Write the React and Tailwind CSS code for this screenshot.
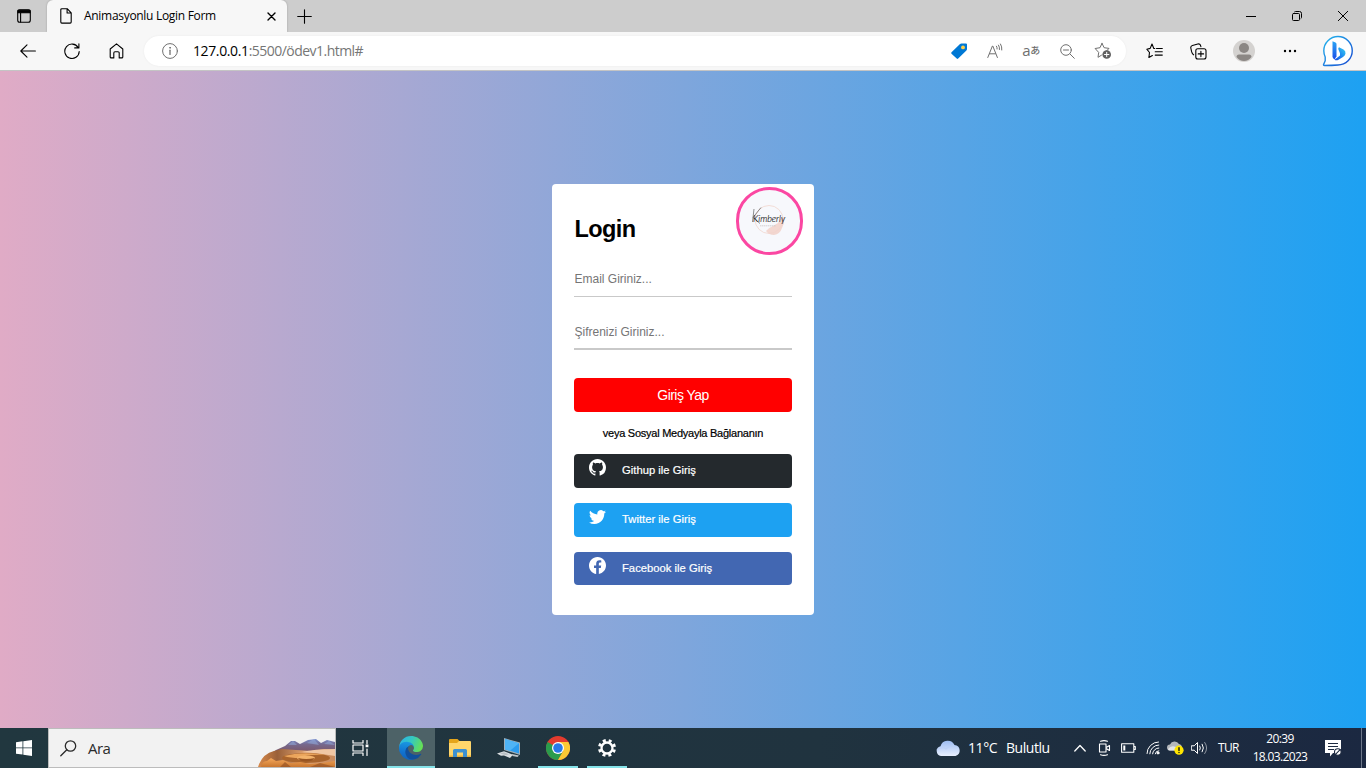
import React from "react";
import { BsGithub, BsTwitter, BsFacebook } from "react-icons/bs";

function Svg({ w, h, children, className = "", sw = 1.1, box }) {
  return (
    <svg width={w} height={h} viewBox={box || `0 0 ${w} ${h}`} fill="none" stroke="currentColor" strokeWidth={sw} strokeLinecap="round" strokeLinejoin="round" className={"block shrink-0 " + className}>
      {children}
    </svg>
  );
}

function Cell({ className, children }) {
  return <div className={"flex h-full shrink-0 items-center justify-center " + className}>{children}</div>;
}

function TabStrip() {
  return (
    <div className="flex h-8 w-full bg-[#cdcdcd]">
      <Cell className="w-12">
        <Svg w={14} h={14}>
          <rect x="0.7" y="0.7" width="12.6" height="12.6" rx="2" />
          <path d="M1 1.2h12v2.6H1z" fill="currentColor" />
          <path d="M3.6 4v9" />
        </Svg>
      </Cell>
      <div className="-ml-px flex w-[240px] items-center rounded-t-md bg-[#f7f7f7] pl-[13px] pr-[11px] shadow-[0_0_2px_#999]">
        <Svg w={12} h={16}>
          <path d="M1.8.7h5.4l4 4.2v9.2a1 1 0 0 1-1 1H1.8a1 1 0 0 1-1-1V1.7a1 1 0 0 1 1-1zM7.1.8V5h4" />
        </Svg>
        <span className="ml-3 w-[140px] whitespace-nowrap text-[12px] leading-4 tracking-[-0.3px]">Animasyonlu Login Form</span>
        <Svg w={9} h={9} className="ml-auto" sw={1.4}>
          <path d="M1 1l7 7M8 1L1 8" />
        </Svg>
      </div>
      <Cell className="ml-[9px] w-4">
        <Svg w={15} h={15}>
          <path d="M7.5.7v13.6M.7 7.5h13.6" />
        </Svg>
      </Cell>
      <div className="ml-auto flex h-8">
        <Cell className="w-[46px]">
          <Svg w={10} h={10} sw={1}><path d="M0 5.5h10" /></Svg>
        </Cell>
        <Cell className="w-[46px]">
          <Svg w={10} h={10} sw={1}>
            <rect x=".5" y="2.5" width="7" height="7" rx="1" />
            <path d="M2.5.9Q2.8.5 3.5.5H7.5a2 2 0 0 1 2 2V6.5q0 .7-.5 1" />
          </Svg>
        </Cell>
        <Cell className="w-[46px]">
          <Svg w={10} h={10} sw={1}><path d="M.3.3l9.4 9.4M9.7.3L.3 9.7" /></Svg>
        </Cell>
      </div>
    </div>
  );
}

function Toolbar() {
  return (
    <div className="flex h-[39px] w-full items-center border-b border-[#c4c4c4] bg-[#f7f7f7] pl-1.5">
      <Cell className="w-11">
        <Svg w={16} h={14}><path d="M15.4 7H.8M7 .8L.8 7 7 13.2" /></Svg>
      </Cell>
      <Cell className="w-11">
        <Svg w={16} h={17}>
          <path d="M14.2 4.6A7.2 7.2 0 1 0 15.2 8.5M14.9.9v4h-4.2" />
        </Svg>
      </Cell>
      <Cell className="w-11">
        <Svg w={15} h={16}>
          <path d="M7.5.9L1.2 6v7.9a1 1 0 0 0 1 1h2.6V10a1.2 1.2 0 0 1 1.2-1.2h3A1.2 1.2 0 0 1 10.2 10v4.9h2.6a1 1 0 0 0 1-1V6z" />
        </Svg>
      </Cell>
      <div className="ml-1.5 flex h-[30px] w-[982px] items-center rounded-full bg-white pl-[18px] pr-[5px] text-[#707070] shadow-[0_0_2px_#e8e8e8]">
        <Svg w={16} h={16} sw={1}>
          <circle cx="8" cy="8" r="7.4" />
          <path d="M8 7.2v4.2" strokeWidth="1.3" />
          <circle cx="8" cy="4.8" r=".4" fill="currentColor" />
        </Svg>
        <span className="ml-[15px] whitespace-nowrap text-[14px] leading-5 tracking-[-0.53px] text-[#767676]">
          <span className="tracking-[-0.38px] text-black">127.0.0.1</span>:5500/ödev1.html#
        </span>
        <div className="ml-auto flex h-full">
          <Cell className="w-9">
            <Svg w={18} h={18}>
              <path d="M1.5 10.3L10 2q.6-.6 1.4-.6H16q1 0 1 1V7q0 .8-.6 1.4L8.200 16.6q-.8.7-1.5 0L1.5 11.7q-.7-.7 0-1.4z" fill="#0078d4" stroke="none" />
              <circle cx="13" cy="5.4" r="1.9" fill="#ffd04a" stroke="none" />
            </Svg>
          </Cell>
          <Cell className="w-9">
            <Svg w={16} h={16} sw={1}>
              <path d="M.8 14.500L5.400 3h.4l4.600 11.500M2.400 10.800h6M9.500 3.200q.8 1.300.6 2.800M11.500 2.100q1.300 2 1 4.400M13.500 1q1.700 2.700 1.300 6" />
            </Svg>
          </Cell>
          <Cell className="w-9">
            <span className="flex items-center pb-0.5 text-[15px] leading-4 tracking-[-0.5px]">
              a<span className="text-[10px] font-medium">あ</span>
            </span>
          </Cell>
          <Cell className="w-9">
            <Svg w={15} h={15} sw={1}>
              <circle cx="6" cy="6" r="5.3" /><path d="M3.500 6h5M10 10l4.300 4.300" />
            </Svg>
          </Cell>
          <Cell className="w-9">
            <Svg w={18} h={18} sw={1}>
              <path d="M8 1.300l2.100 4.400 4.900.7-2.600 2.700M7.500 13.200L4 15.300l.7-4.900L1.100 6.500 6 5.700 8 1.300" />
              <circle cx="12.700" cy="12.500" r="4.300" fill="#606060" stroke="none" />
              <path d="M12.700 10.300v4.400M10.500 12.500h4.400" stroke="white" />
            </Svg>
          </Cell>
        </div>
      </div>
      <Cell className="ml-1.5 w-11">
        <Svg w={17} h={16}>
          <path d="M8.800 5.500H7.800L6 1 4.200 5.400.8 6.200l2.700 3.300-.6 5L6.400 12.500M10.500 5.500h5.800M9.200 8.800h7.100M9.200 12.100h7.100" />
        </Svg>
      </Cell>
      <Cell className="w-11">
        <Svg w={17} h={17}>
          <rect x="5.800" y="5.800" width="10.200" height="10.200" rx="2" />
          <path d="M10.900 8.200v5.400M8.200 10.900h5.400M3.600 11.800C2.200 11 1.900 9.900 1.600 8.700L.8 5Q.5 3 2.400 2.500L7.800 1q2-.4 2.700 1.300l.4 1.300" />
        </Svg>
      </Cell>
      <Cell className="w-[47px]">
        <Svg w={22} h={22}>
          <circle cx="11" cy="11" r="11" fill="#d4d2d0" stroke="none" />
          <circle cx="11" cy="8" r="5" fill="#8b8784" stroke="none" />
          <path d="M3.500 17q0-2.500 2.500-2.500h10q2.500 0 2.500 2.500Q15.500 21 11 21T3.500 17z" fill="#8b8784" stroke="none" />
        </Svg>
      </Cell>
      <Cell className="w-[46px]">
        <Svg w={14} h={4}>
          <g fill="currentColor" stroke="none"><circle cx="2" cy="2" r="1.200" /><circle cx="7" cy="2" r="1.200" /><circle cx="12" cy="2" r="1.200" /></g>
        </Svg>
      </Cell>
      <Cell className="w-[50px]">
        <Svg w={32} h={32}>
          <defs>
            <linearGradient id="bingRing" x1="0" y1="0" x2="1" y2="1"><stop stopColor="#24b9ee" /><stop offset="1" stopColor="#1747d0" /></linearGradient>
            <linearGradient id="bingB" x1="0" y1="1" x2="1" y2="0"><stop stopColor="#1b4ce0" /><stop offset=".5" stopColor="#1f8df0" /><stop offset="1" stopColor="#38d0f0" /></linearGradient>
            <linearGradient id="bingStem" x1="0" y1="0" x2="0" y2="1"><stop stopColor="#2aa5f4" /><stop offset="1" stopColor="#1b4ce8" /></linearGradient>
          </defs>
          <path d="M16 1.500A14.200 14.200 0 1 1 16 30q-6 .5-13.500.5c-1 0-1.200-.6-.8-1.300l1.500-3.500V22Q1.800 19 1.800 15.700A14.200 14.200 0 0 1 16 1.500z" fill="white" stroke="url(#bingRing)" strokeWidth="1.400" />
          <path d="M10.500 6.300l3 1.200q1 .5 1 1.500v12.300l-1.800 3.200q-2.200-.8-2.200-3z" fill="url(#bingStem)" stroke="none" />
          <path d="M17 12.300l4.500 2.200q2.400 1.500 2 4.200-.4 2-2.500 3.300l-4.500 2.700q-2.200 1-4 0L18 20.500v-2.300l-1.500-3.500q-.7-1.600.5-2.400z" fill="url(#bingB)" stroke="none" />
        </Svg>
      </Cell>
    </div>
  );
}

function SocialButton({ color, icon, label, height = "h-[34px]" }) {
  return (
    <button className={`flex w-full items-start rounded-[4px] pl-[15px] text-left text-white ${height} ${color}`}>
      <span className="mt-[5px] w-[33px]">{icon}</span>
      <span className="mt-[9px] whitespace-nowrap text-[11.25px] leading-[14px] [-webkit-text-stroke:0.2px_white]">{label}</span>
    </button>
  );
}

function LoginCard() {
  return (
    <form className="relative mt-[113px] h-[431px] w-[262px] rounded-[4px] bg-white px-[22px] pt-[32px] font-['Liberation_Sans',Arial,sans-serif] text-black">
      <div className="absolute left-[184px] top-[3px] h-[68px] w-[67px] rounded-full border-[3px] border-[#fb47a2] bg-[#f7f8fc]">
        <svg width="61" height="62" viewBox="0 0 61 62" className="block">
          <circle cx="30" cy="29.500" r="14" fill="none" stroke="#f3ddd7" strokeWidth="1" />
          <path d="M27 41q2-3 7-5l5-3 3-5 3-1q-1 4 0 6l-2 5q-2 6-8 7-5 0-8-4z" fill="#f2d3cb" opacity=".9" />
          <path d="M15 19l-1.500 13M22 17.500l-8 10 7 6" fill="none" stroke="#222" strokeWidth=".5" />
          <text x="14" y="32" fontFamily="Lato, sans-serif" fontStyle="italic" fontWeight="300" fontSize="9" fill="#222" stroke="#222" strokeWidth=".15">Kimberly</text>
          <path d="M21 35.800h16" stroke="#c9c5c6" strokeWidth=".8" strokeDasharray="1.500 .5" />
        </svg>
      </div>
      <h1 className="ml-[0.500px] text-[23.500px] font-bold leading-[26px] tracking-[-0.6px]">Login</h1>
      <input className="mt-[19px] block h-[36px] w-full border-b border-[#c9c9c9] pl-[0.500px] text-[12px] outline-none placeholder:text-[#757575] placeholder:opacity-100" placeholder="Email Giriniz..." />
      <input className="mt-[17px] block h-[36px] w-full border-b-2 border-[#c9c9c9] pl-[0.500px] pt-[2px] text-[12px] outline-none placeholder:text-[#757575] placeholder:opacity-100" placeholder="Şifrenizi Giriniz..." />
      <button className="mt-7 flex h-[34px] w-full items-center justify-center rounded-[4px] bg-[#ff0000] pt-px text-[14px] tracking-[-0.55px] text-white">Giriş Yap</button>
      <p className="my-[14px] text-center text-[11px] leading-[14px] tracking-[-0.25px] [-webkit-text-stroke:0.2px_black]">veya Sosyal Medyayla Bağlananın</p>
      <div className="flex flex-col gap-[15px]">
        <SocialButton color="bg-[#24292d]" icon={<BsGithub size={17} />} label="Githup ile Giriş" />
        <SocialButton color="bg-[#1da1f2]" icon={<BsTwitter size={17} />} label="Twitter ile Giriş" />
        <SocialButton color="bg-[#4267b2]" icon={<BsFacebook size={17} />} label="Facebook ile Giriş" height="h-[33px]" />
      </div>
    </form>
  );
}

function SearchBox() {
  return (
    <div className="flex h-10 w-[288px] items-center border border-[#bcbcbc] bg-[#f2f2f2] pl-[11px] text-[#2b2b2b]">
      <Svg w={17} h={17} sw={1.3}><circle cx="10.500" cy="6" r="5.200" /><path d="M6.800 9.700L.8 15.700" /></Svg>
      <span className="ml-[11px] text-[15px] leading-5 tracking-[-0.5px]">Ara</span>
      <Svg w={77} h={28} className="ml-auto self-end">
        <defs>
          <linearGradient id="peak" x1="0" y1="0" x2="0" y2="1"><stop stopColor="#7a8fce" /><stop offset=".4" stopColor="#76688c" /><stop offset="1" stopColor="#7d5462" /></linearGradient>
          <linearGradient id="dune" x1="0" y1="0" x2="0" y2="1"><stop stopColor="#f5a95c" /><stop offset="1" stopColor="#c9762f" /></linearGradient>
          <linearGradient id="slope" x1="0" y1="0" x2="1" y2="0"><stop stopColor="#d98a4a" /><stop offset=".25" stopColor="#9a6038" /><stop offset=".6" stopColor="#dca070" /><stop offset="1" stopColor="#c98a5c" /></linearGradient>
        </defs>
        <g stroke="none">
          <path d="M18 11l9-4 6-5h4l5 3 8-4 8-1 5 4 6-3 4 1 4 1v11H14z" fill="url(#peak)" />
          <path d="M30 6l5-4 4 4zM49 4l7-4 5 6zM66 5l5-3 6 4z" fill="#90a5d5" opacity=".6" />
          <path d="M0 28Q4 15 16 12l8-2 14 1 15 1 13-2 11 1v17z" fill="url(#slope)" />
          <path d="M44 13q12-3 33-3v7q-16-3-33-4z" fill="#f0c7a4" />
          <ellipse cx="48" cy="19" rx="24" ry="5" fill="#a9642c" />
          <path d="M26 17q18-5 42-1-20-1-26 3-10 0-16-2z" fill="#eba55c" />
          <ellipse cx="48" cy="19" rx="9" ry="2.500" fill="#f3b36b" />
          <path d="M40 19q8 2 17 0-3 3.500-9 3.500t-8-3.500z" fill="#985522" />
          <path d="M3 28q1-6 6-6l4-3 5 3 7-1 8 3 9-1 10 2 12-1 13-2v6z" fill="url(#dune)" />
          <path d="M22 28l5-5 6 5zM52 28l10-4 15 4z" fill="#8d4b20" opacity=".6" />
        </g>
      </Svg>
    </div>
  );
}

function TaskApps() {
  return (
    <div className="flex h-10">
      <Cell className="mr-[3px] w-12">
        <Svg w={17} h={16} sw={1.2} className="text-white">
          <path d="M1 .5v2.500h10V.5M1 15.500V13h10v2.500M1 5h10v6H1zM15 .5v3M15 9v6.500" />
          <path d="M13.600 4.500h2.800v2.700h-2.800z" fill="white" stroke="none" />
        </Svg>
      </Cell>
      <div className="flex h-10 w-12 items-center justify-center border-b-2 border-[#85e3e9] bg-[#4d6267] pt-0.5">
        <Svg w={24} h={24} box="0 0 256 256">
          <defs>
            <linearGradient id="edgeTop" x1="0" y1=".2" x2="1" y2=".5"><stop stopColor="#2bb2e8" /><stop offset=".5" stopColor="#35c8c0" /><stop offset="1" stopColor="#66e054" /></linearGradient>
            <linearGradient id="edgeLow" x1=".5" y1="0" x2=".4" y2="1"><stop stopColor="#1b9ce2" /><stop offset=".6" stopColor="#1173d0" /><stop offset="1" stopColor="#0f62bb" /></linearGradient>
          </defs>
          <g stroke="none">
            <path d="M231 190.500c-3.400 1.800-6.900 3.400-10.500 4.700a101.500 101.500 0 0 1-35.900 6.400c-47.300 0-88.500-32.500-88.500-74.300a31.500 31.500 0 0 1 16.400-27.300c-42.800 1.800-53.800 46.400-53.800 72.500 0 73.900 68.100 81.400 82.800 81.400 7.900 0 19.800-2.300 27-4.600l1.300-.4a128.300 128.300 0 0 0 66.600-52.800 4 4 0 0 0-5.400-5.600z" fill="#11509c" />
            <path d="M105.700 241.400a79.200 79.200 0 0 1-22.700-21.300 80.700 80.700 0 0 1 29.500-120c3.200-1.500 8.500-4.100 15.600-4a32.400 32.400 0 0 1 25.700 13 31.900 31.900 0 0 1 6.300 18.700c0-.2 24.500-79.600-80-79.600-43.900 0-80 41.700-80 78.200a130.200 130.200 0 0 0 12.100 56 128 128 0 0 0 156.400 67 75.500 75.500 0 0 1-62.800-8z" fill="url(#edgeLow)" />
            <path d="M152.300 148.900c-.8 1-3.300 2.500-3.300 5.700 0 2.600 1.700 5.100 4.700 7.200 14.400 10 41.500 8.700 41.600 8.700a59.600 59.600 0 0 0 30.300-8.300 61.400 61.400 0 0 0 30.400-52.900c.3-22.400-8-37.300-11.300-43.900C223.500 23.900 177.700 0 128 0A128 128 0 0 0 0 126.200c.5-36.500 36.800-66 80-66 3.500 0 23.500.3 42 10 16.300 8.600 24.900 18.900 30.800 29.200 6.200 10.700 7.300 24.100 7.300 29.500s-2.700 13.300-7.800 19.900z" fill="url(#edgeTop)" />
          </g>
        </Svg>
      </div>
      <Cell className="ml-px w-12">
        <Svg w={22} h={19}>
          <g stroke="none">
            <path d="M0 2V1q0-1 1-1h7.500l2 2v3H0z" fill="#e5a51b" />
            <path d="M0 4h8l2-2h11q1 0 1 1v14H0z" fill="#ffd66b" />
            <path d="M0 16.500h22V18H0z" fill="#eab13c" />
            <path d="M4 18v-6.500q0-1.500 1.500-1.500h11q1.500 0 1.500 1.500V18h-4v-4.500H8V18z" fill="#3d91d2" />
          </g>
        </Svg>
      </Cell>
      <Cell className="ml-px w-12">
        <Svg w={24} h={22}>
          <g stroke="none">
            <path d="M7 1l16 4.500v12.500L7 13z" fill="#9fb0bb" />
            <path d="M8 2l14 4.200v10.300L8 12.200z" fill="#2b9cef" /><path d="M8 2l14 4.200L13 13.700 8 12.200z" fill="#4fb4f6" />
            <path d="M15 17l7 1.500-1.500 1.500-5-1z" fill="#c0c6ca" />
            <path d="M0 16.500l7-2.300 9 3.500-3 3.300-6-2.500-3 .3z" fill="#d9dde0" /><path d="M3 16.500l4-1.300 5 2-3 1z" fill="#b9bfc4" />
          </g>
        </Svg>
      </Cell>
      <div className="ml-[5px] flex h-10 w-10 items-center justify-center border-b-2 border-[#85e3e9] pt-0.5">
        <Svg w={24} h={24}>
          <g stroke="none">
            <circle cx="12" cy="12" r="12" fill="#e33b2e" />
            <path d="M1.600 6A12 12 0 0 0 12 24l5.200-9L12 12z" fill="#2a9c4c" />
            <path d="M12 24A12 12 0 0 0 22.400 6H12l5.200 9z" fill="#fcc934" />
            <circle cx="12" cy="12" r="6" fill="white" /><circle cx="12" cy="12" r="4.800" fill="#2879e8" />
          </g>
        </Svg>
      </div>
      <div className="ml-[9px] flex h-10 w-10 items-center justify-center border-b-2 border-[#85e3e9] pt-0.5 text-white">
        <Svg w={20} h={20}>
          <circle cx="10" cy="10" r="5.500" strokeWidth="2.300" />
          <circle cx="10" cy="10" r="7.500" strokeWidth="3" strokeDasharray="2.945 2.945" strokeDashoffset="-1.470" strokeLinecap="butt" />
        </Svg>
      </div>
    </div>
  );
}

function Tray() {
  return (
    <div className="ml-auto flex h-10 items-center whitespace-nowrap text-white">
      <Svg w={25} h={16}>
        <defs><linearGradient id="cloud" x1="0" y1="0" x2="0" y2="1"><stop stopColor="#9dbdf2" /><stop offset="1" stopColor="#e9f0ff" /></linearGradient></defs>
        <path d="M5 16a5 5 0 0 1-.5-9.800A7.500 7.500 0 0 1 18.500 5a5.600 5.600 0 0 1 1 11z" fill="url(#cloud)" stroke="none" />
        <path d="M1 10Q6 6 10 9q4-4 8-3" stroke="#b9cef5" opacity=".7" />
      </Svg>
      <span className="ml-[7px] w-[38px] text-[14px] leading-5 tracking-[-0.4px]">11°C</span>
      <span className="w-[68px] text-[14px] leading-5 tracking-[-0.45px]">Bulutlu</span>
      <Svg w={12} h={8} sw={1.3}><path d="M.8 7L6 1.500 11.200 7" /></Svg>
      <Svg w={13} h={16} className="ml-3">
        <path d="M2.500 1.300Q6 0 9.500 1.300M2.500 14.700Q6 16 9.500 14.700M1.500 4H8v8H1.500zM8.500 7.300L11.500 5.500v5L8.500 8.700" />
      </Svg>
      <Svg w={15} h={10} sw={1.1} className="ml-[10px]">
        <path d="M.6.8h12.200v8.400H.6zM12.800 3.500h1.500v3h-1.500" /><path d="M2.300 2.500h2v5h-2z" fill="white" stroke="none" />
      </Svg>
      <Svg w={14} h={14} sw={1} className="ml-[10px]">
        <path d="M1 12.500A11.500 11.500 0 0 1 12.500 1M3.800 12.800A9 9 0 0 1 12.800 4M6.600 12.800A6.200 6.200 0 0 1 12.800 7M9.300 12.800a3.500 3.500 0 0 1 3.500-3" />
        <circle cx="12" cy="12" r="1" fill="white" />
      </Svg>
      <Svg w={17} h={14} className="ml-[7px]">
        <path d="M3 9.500a3 3 0 0 1 0-6A5 5 0 0 1 12 3q3 .5 3 4v2.500z" fill="#b4b7bb" stroke="none" />
        <path d="M1 8Q4 4 9 6l3 1v2.500H3Q1 9.500 1 8z" fill="#e3e5e7" stroke="none" />
        <circle cx="12" cy="9.200" r="4.600" fill="#ffe500" stroke="none" /><path d="M12 6.700v2.700M12 11.500v.1" stroke="#111" strokeWidth="1.400" />
      </Svg>
      <Svg w={17} h={14} sw={1} className="ml-[7px]">
        <path d="M.7 4.800h2.500L6.500 1.500v11L3.200 9.200H.7zM8.800 5q1.200 2 0 4M11.200 3.200q2.500 3.800 0 7.600" />
        <path d="M13.700 1.400q4 5.600 0 11.200" opacity=".5" />
      </Svg>
      <span className="ml-[10px] w-[22px] text-[12px] leading-4 tracking-[-0.7px]">TUR</span>
      <div className="ml-[13px] w-[56px] pb-px text-center text-[12px] leading-[18px] tracking-[-0.65px]">
        <div className="-ml-[2px]">20:39</div>
        <div className="-ml-[2px]">18.03.2023</div>
      </div>
      <Svg w={17} h={17} className="ml-4">
        <path d="M0 0h16v13H8l-3 3.500V13H0z" fill="white" stroke="none" />
        <path d="M3 3.500h10M3 6.500h10M3 9.500h6" stroke="#1d2a40" strokeLinecap="butt" />
        <circle cx="12.800" cy="12" r="3.300" fill="white" stroke="#1d2a40" /><path d="M10.500 14.300l4.600-4.600" stroke="#1d2a40" />
      </Svg>
      <div className="ml-[19px] mr-1 h-10 w-px bg-[#6d7789]" />
    </div>
  );
}

export default function App() {
  return (
    <div className="flex h-[768px] w-[1366px] flex-col overflow-hidden font-['Open_Sans','Noto_Sans_CJK_JP',sans-serif] text-black">
      <TabStrip />
      <Toolbar />
      <main className="flex h-[657px] justify-center bg-[linear-gradient(90deg,#e0abc6,#1da1f2)]">
        <LoginCard />
      </main>
      <footer className="flex h-10 bg-[linear-gradient(90deg,#21373f,#20333f_60%,#1b2841)]">
        <Cell className="w-12">
          <Svg w={16} h={16}><path d="M0 2.200L6.500 1.300V7.500H0zM7.300 1.200L16 0v7.500H7.300zM0 8.300h6.500v6.300L0 13.700zM7.300 8.300H16V16l-8.700-1.200z" fill="white" stroke="none" /></Svg>
        </Cell>
        <SearchBox />
        <TaskApps />
        <Tray />
      </footer>
    </div>
  );
}
